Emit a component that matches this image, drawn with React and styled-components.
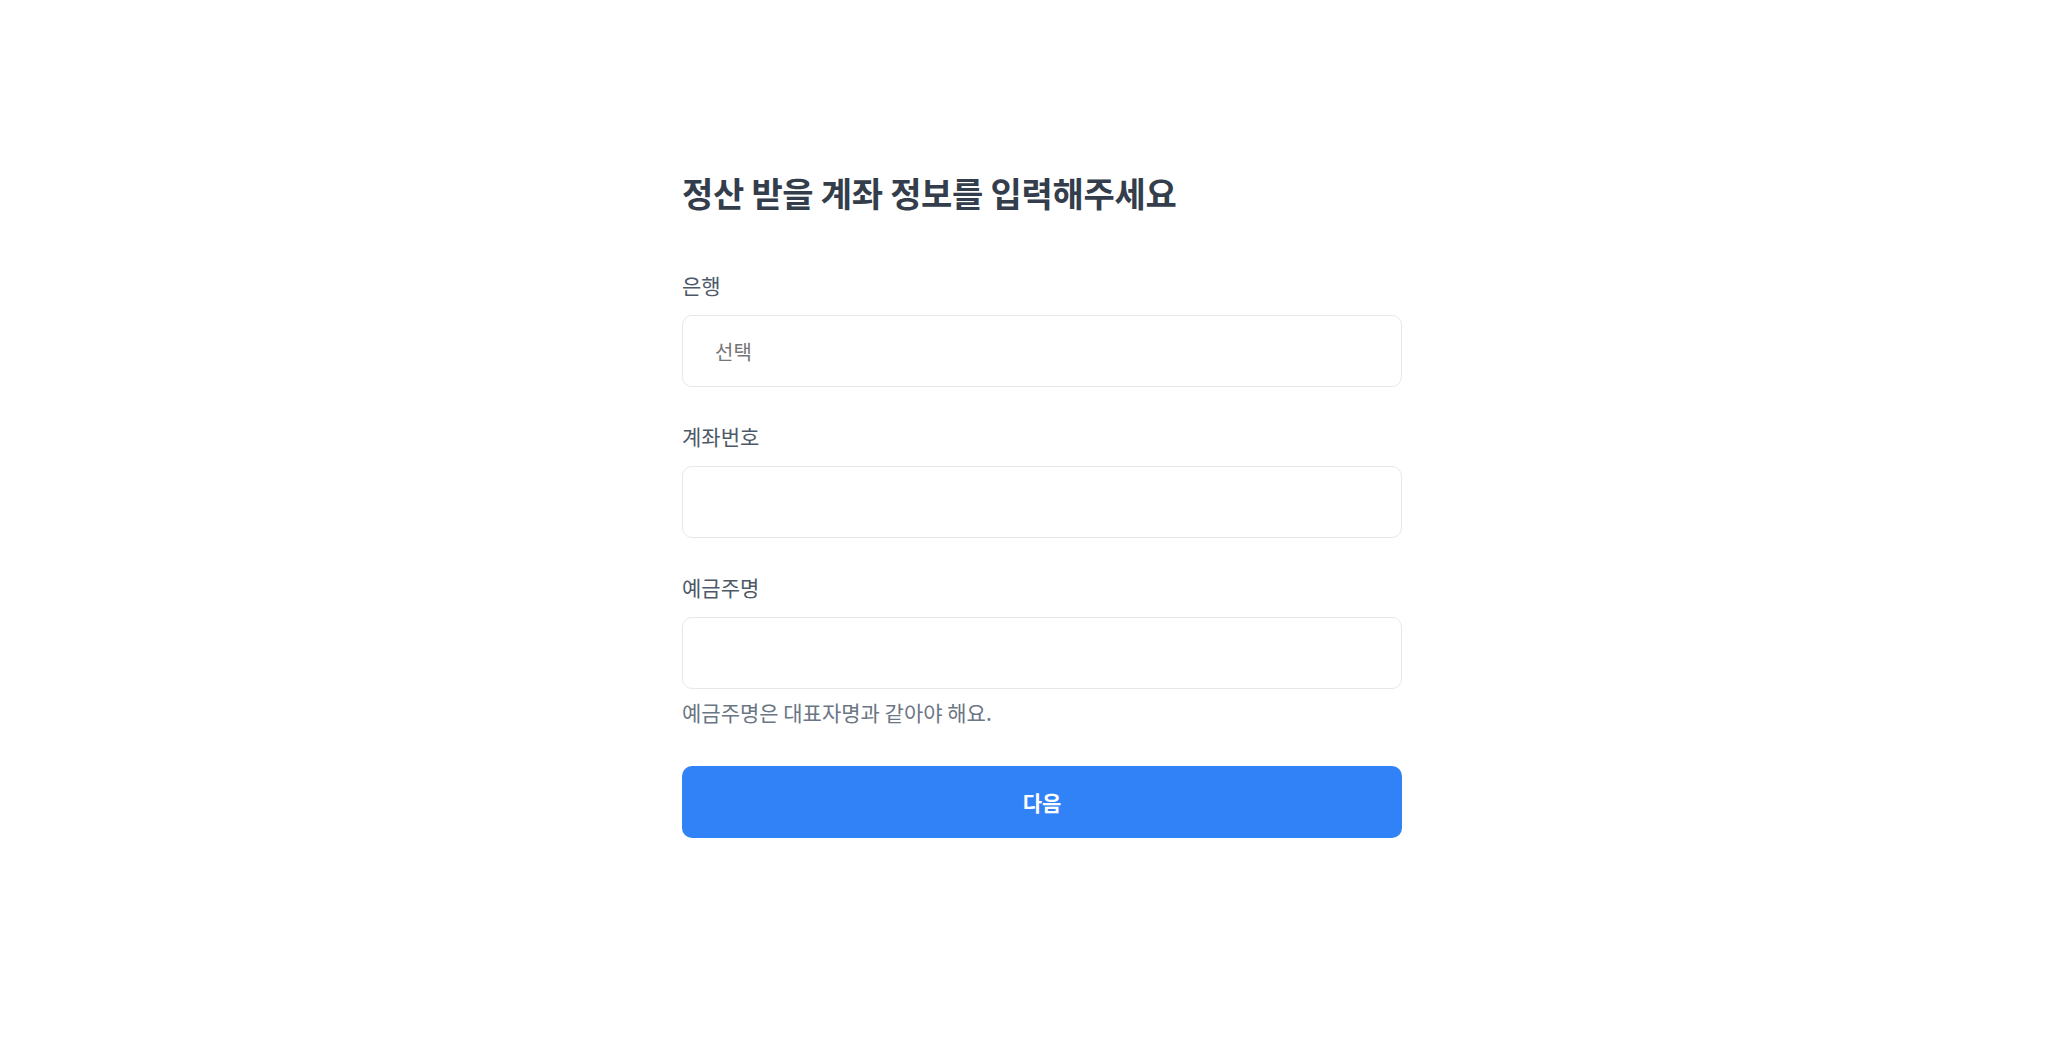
import React from 'react'
import styled, { createGlobalStyle } from 'styled-components'

const GlobalStyle = createGlobalStyle`
  html, body {
    margin: 0;
    padding: 0;
    background: #ffffff;
  }
  body {
    font-family: "Noto Sans CJK KR", "Noto Sans", sans-serif;
    color: #333d4b;
  }
  * {
    box-sizing: border-box;
  }
`

const fields = [
  { id: 'bank', label: '은행', placeholder: '선택' },
  { id: 'account', label: '계좌번호', placeholder: '' },
  { id: 'holder', label: '예금주명', placeholder: '', help: '예금주명은 대표자명과 같아야 해요.' },
]

class App extends React.Component {
  constructor() {
    super()
    this.state = { bank: '', account: '', holder: '' }
  }

  handleChange = e => {
    this.setState({ [e.target.name]: e.target.value })
  }

  handleSubmit = e => {
    e.preventDefault()
  }

  render() {
    return (
      <Page>
        <GlobalStyle />
        <Form onSubmit={this.handleSubmit}>
          <Title>정산 받을 계좌 정보를 입력해주세요</Title>

          <Fields>
            {fields.map(f => (
              <Field key={f.id}>
                <Label htmlFor={f.id}>{f.label}</Label>
                <Input
                  id={f.id}
                  name={f.id}
                  value={this.state[f.id]}
                  onChange={this.handleChange}
                  placeholder={f.placeholder}
                />
                {f.help && <Help>{f.help}</Help>}
              </Field>
            ))}
          </Fields>

          <Submit type="submit">다음</Submit>
        </Form>
      </Page>
    )
  }
}

const Page = styled.main`
  min-height: 100vh;
  display: flex;
  justify-content: center;
  padding: 170px 0 0 36px;
`

const Form = styled.form`
  width: 720px;
  display: flex;
  flex-direction: column;
`

const Title = styled.h1`
  margin: 0 0 54px;
  font-size: 34px;
  line-height: 46px;
  font-weight: 700;
  letter-spacing: -0.3px;
  color: #333d4b;
`

const Fields = styled.div`
  display: flex;
  flex-direction: column;
  gap: 34px;
`

const Field = styled.div`
  display: flex;
  flex-direction: column;
`

const Label = styled.label`
  font-size: 21px;
  line-height: 30px;
  margin-bottom: 15px;
  color: #4e5968;
`

const Input = styled.input`
  height: 72px;
  width: 100%;
  padding: 0 32px;
  border: 1px solid #e5e8eb;
  border-radius: 10px;
  background: #ffffff;
  font-family: inherit;
  font-size: 20px;
  color: #333d4b;
  ::placeholder {
    color: #a3aab4;
  }
  :focus {
    outline: 0;
    border-color: #3182f6;
  }
`

const Help = styled.p`
  margin: 8px 0 0;
  font-size: 21px;
  line-height: 30px;
  color: #6b7684;
`

const Submit = styled.button`
  margin-top: 39px;
  height: 72px;
  width: 100%;
  border: 0;
  border-radius: 10px;
  background: #3182f6;
  color: #ffffff;
  font-family: inherit;
  font-size: 21px;
  font-weight: 700;
  cursor: pointer;
`

export default App
